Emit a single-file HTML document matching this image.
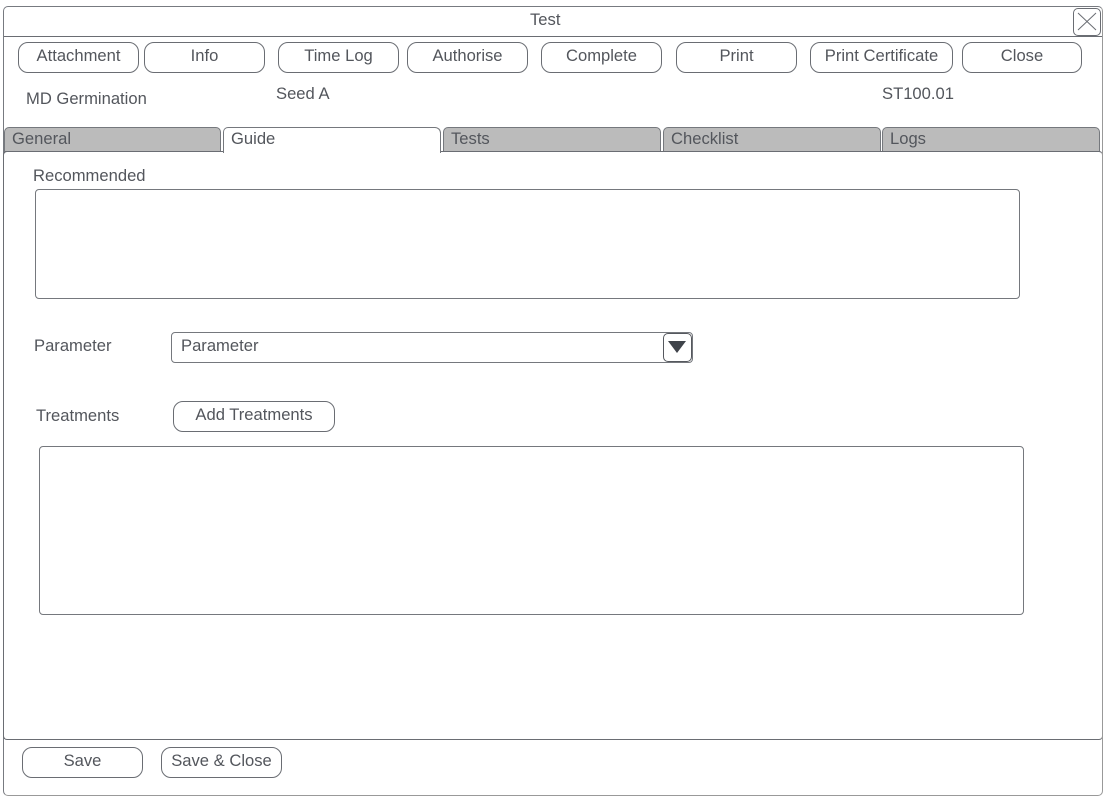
<!DOCTYPE html>
<html><head><meta charset="utf-8"><style>
html,body{margin:0;padding:0;background:#fff;width:1110px;height:806px;overflow:hidden}
body{position:relative;font-family:"Liberation Sans",sans-serif;font-size:16.6px;color:#53565c;filter:blur(0.3px)}
div{position:absolute;box-sizing:border-box;white-space:nowrap}
.b{border:1px solid #6a6d73;border-radius:10px;height:31px;top:42px;text-align:center;line-height:25px;background:#fff}
.t{height:25px;top:127px;border:1px solid #75787d;border-radius:5px 5px 0 0;background:#bbb;padding-left:7px;line-height:21px}
.l{line-height:20px}
.box{border:1px solid #75787d;border-radius:4px;background:#fff}
</style></head><body>
<div style="left:3px;top:6px;width:1100px;height:790px;border:1px solid #777a80;border-bottom-color:#999;border-right-color:#999;border-radius:5px"></div>
<div style="left:4px;top:36px;width:1098px;height:1px;background:#6a6d73"></div>
<div class="l" style="left:530px;top:10px">Test</div>
<div style="left:1073px;top:8px;width:28px;height:28px;border:1px solid #6a6d73;border-radius:5px;background:#fff"><svg width="26" height="26" style="display:block"><path d="M4 4L22 21M22 4L4 21" stroke="#6a6d73" stroke-width="1" fill="none"/></svg></div>
<div class="b" style="left:18px;width:121px">Attachment</div>
<div class="b" style="left:144px;width:121px">Info</div>
<div class="b" style="left:278px;width:121px">Time Log</div>
<div class="b" style="left:407px;width:121px">Authorise</div>
<div class="b" style="left:541px;width:121px">Complete</div>
<div class="b" style="left:676px;width:121px">Print</div>
<div class="b" style="left:810px;width:143px">Print Certificate</div>
<div class="b" style="left:962px;width:120px">Close</div>
<div class="l" style="left:26px;top:89px">MD Germination</div>
<div class="l" style="left:276px;top:84px">Seed A</div>
<div class="l" style="left:882px;top:84px">ST100.01</div>
<div class="t" style="left:4px;width:217px">General</div>
<div class="t" style="left:443px;width:218px">Tests</div>
<div class="t" style="left:663px;width:218px">Checklist</div>
<div class="t" style="left:882px;width:218px">Logs</div>
<div style="left:3px;top:151px;width:1100px;height:589px;border:1px solid #6a6d73;border-right-color:#999;border-radius:4px;background:#fff"></div>
<div class="t" style="left:223px;width:218px;height:26px;background:#fff;border-bottom:none;border-radius:5px 6px 0 0">Guide</div>
<div class="l" style="left:33px;top:166px">Recommended</div>
<div class="box" style="left:35px;top:189px;width:985px;height:110px"></div>
<div class="l" style="left:34px;top:336px">Parameter</div>
<div class="box" style="left:171px;top:332px;width:522px;height:31px;padding-left:9px;line-height:25px">Parameter</div>
<div style="left:663px;top:333px;width:29px;height:29px;border:1px solid #55585e;border-radius:5px;background:#fff"><svg width="27" height="27" style="display:block"><path d="M4 7H22L13 19Z" fill="#3f434a"/></svg></div>
<div class="l" style="left:36px;top:406px">Treatments</div>
<div class="b" style="left:173px;top:401px;width:162px">Add Treatments</div>
<div class="box" style="left:39px;top:446px;width:985px;height:169px"></div>
<div class="b" style="left:22px;top:747px;width:121px">Save</div>
<div class="b" style="left:161px;top:747px;width:121px">Save &amp; Close</div>
</body></html>
